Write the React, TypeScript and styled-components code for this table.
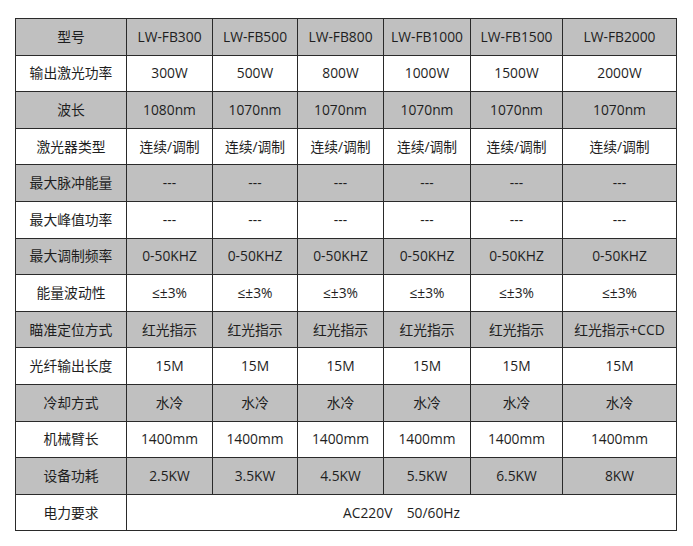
import React from 'react';
import styled, { createGlobalStyle } from 'styled-components';

const GlobalStyle = createGlobalStyle`
  html, body {
    margin: 0;
    padding: 0;
    background: #ffffff;
  }
  body {
    font-family: 'Open Sans', 'Noto Sans CJK SC', sans-serif;
    color: #1e1e1e;
  }
`;

const models = ['LW-FB300', 'LW-FB500', 'LW-FB800', 'LW-FB1000', 'LW-FB1500', 'LW-FB2000'];

const rows: [string, string[]][] = [
  ['输出激光功率', ['300W', '500W', '800W', '1000W', '1500W', '2000W']],
  ['波长', ['1080nm', '1070nm', '1070nm', '1070nm', '1070nm', '1070nm']],
  ['激光器类型', Array(6).fill('连续/调制')],
  ['最大脉冲能量', Array(6).fill('---')],
  ['最大峰值功率', Array(6).fill('---')],
  ['最大调制频率', Array(6).fill('0-50KHZ')],
  ['能量波动性', Array(6).fill('≤±3%')],
  ['瞄准定位方式', ['红光指示', '红光指示', '红光指示', '红光指示', '红光指示', '红光指示+CCD']],
  ['光纤输出长度', Array(6).fill('15M')],
  ['冷却方式', Array(6).fill('水冷')],
  ['机械臂长', Array(6).fill('1400mm')],
  ['设备功耗', ['2.5KW', '3.5KW', '4.5KW', '5.5KW', '6.5KW', '8KW']],
];

const colWidths = [111, 86, 85, 86, 87, 92, 114];

const Page = styled.div`
  padding: 18px 0 0 15px;
`;

const SpecTable = styled.table`
  border-collapse: collapse;
  table-layout: fixed;
  width: 661px;
  border: 1px solid #2a2a2a;
`;

const Row = styled.tr<{ $shaded: boolean }>`
  height: 36.6px;
  background: ${(p) => (p.$shaded ? '#c0c0c0' : '#ffffff')};
`;

const Cell = styled.td`
  border: 1px solid #2a2a2a;
  padding: 0;
  text-align: center;
  vertical-align: middle;
  font-size: 13.8px;
  line-height: 1;
  white-space: pre;
`;

export default function App() {
  return (
    <Page>
      <GlobalStyle />
      <SpecTable>
        <colgroup>
          {colWidths.map((w, i) => (
            <col key={i} style={{ width: w }} />
          ))}
        </colgroup>
        <tbody>
          <Row $shaded>
            <Cell>型号</Cell>
            {models.map((m) => (
              <Cell key={m}>{m}</Cell>
            ))}
          </Row>
          {rows.map(([label, values], i) => (
            <Row key={label} $shaded={i % 2 === 1}>
              <Cell>{label}</Cell>
              {values.map((v, j) => (
                <Cell key={j}>{v}</Cell>
              ))}
            </Row>
          ))}
          <Row $shaded={false}>
            <Cell>电力要求</Cell>
            <Cell colSpan={6}>{'AC220V    50/60Hz'}</Cell>
          </Row>
        </tbody>
      </SpecTable>
    </Page>
  );
}
